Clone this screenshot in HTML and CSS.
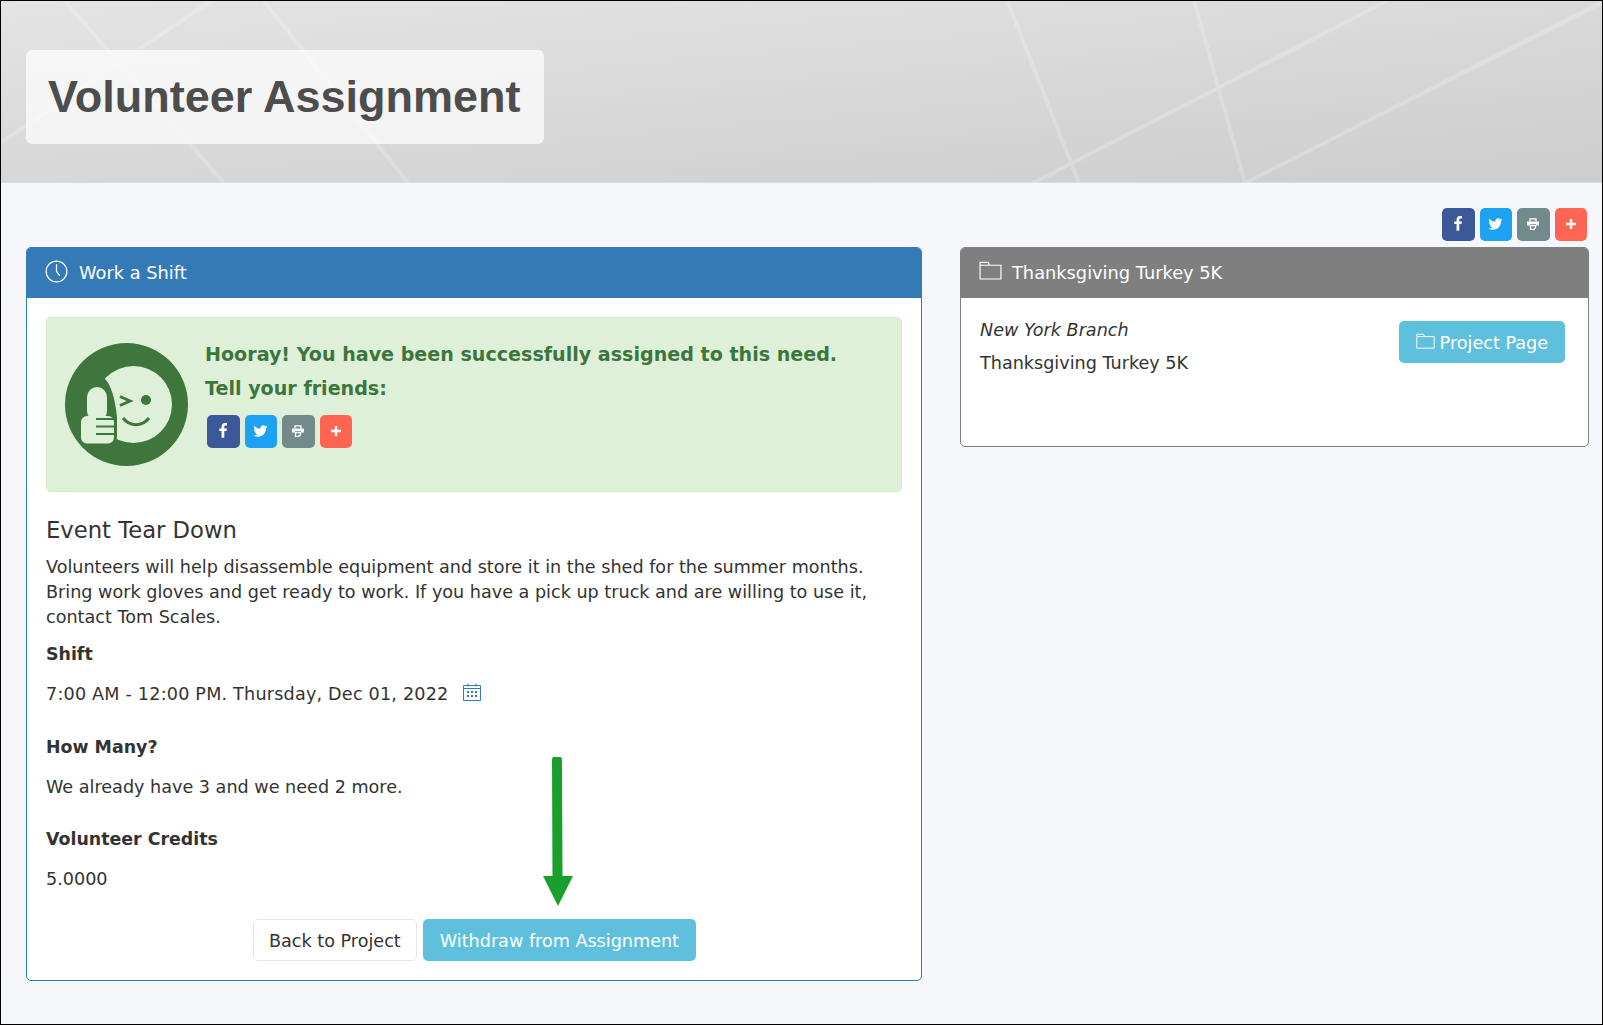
FILE: index.html
```html
<!DOCTYPE html>
<html lang="en">
<head>
<meta charset="utf-8">
<title>Volunteer Assignment</title>
<link rel="stylesheet" href="styles.css">
</head>
<body>
<svg class="sprites" width="0" height="0" aria-hidden="true">
  <symbol id="i-fb" viewBox="0 0 1792 1792"><path fill="#fff" d="M1343 12v264h-157q-86 0-116 36t-30 108v189h293l-39 296h-254v759h-306v-759h-255v-296h255v-218q0-186 104-288.5t277-102.5q147 0 228 12z"/></symbol>
  <symbol id="i-tw" viewBox="0 0 1792 1792"><path fill="#fff" d="M1620 408q-67 98-162 167 1 14 1 42 0 130-38 259.5t-115.5 248.5-184.5 210.5-258 146-323 54.5q-271 0-496-145 35 4 78 4 225 0 401-138-105-2-188-64.5t-114-159.5q33 5 61 5 43 0 85-11-112-23-185.5-111.5t-73.5-205.5v-4q68 38 146 41-66-44-105-115t-39-154q0-88 44-163 121 149 294.5 238.5t371.5 99.5q-8-38-8-74 0-134 94.5-228.5t228.5-94.5q140 0 236 102 109-21 205-78-37 115-142 178 93-10 186-50z"/></symbol>
  <symbol id="i-pr" viewBox="0 0 12 12"><path fill="none" stroke="#fff" stroke-width="1.300" d="M3 3.500V.8h6v2.700M3.500 7.500h5v2.200L7 11.300H3.500z"/><path fill="#fff" d="M0 3.500h12v4H9V6H3v1.500H0z"/></symbol>
  <symbol id="i-pl" viewBox="0 0 12 12"><path fill="#fff" d="M4.800 1h2.400v3.800H11v2.400H7.200V11H4.800V7.200H1V4.800h3.800z"/></symbol>
  <symbol id="i-folder" viewBox="0 0 24 20"><path fill="none" stroke="currentColor" stroke-width="1.200" d="M1 4V1.500h8.500L11 4.500h12v14.500H1V4.500h10"/></symbol>
</svg>

<div class="page">
  <header class="banner">
    <svg class="banner-lines" viewBox="0 0 1603 183" preserveAspectRatio="none" aria-hidden="true">
      <g stroke="#fff" stroke-opacity=".2" stroke-width="4" fill="none">
        <path d="M64 0 224 183M212 0 0 143M263 0 408 183"/>
        <path d="M1007 0 1079 183M1194 0 1245 183M1389 0 1033 183M1603 2 1245 183"/>
      </g>
    </svg>
    <h1 class="title">Volunteer Assignment</h1>
  </header>

  <main class="content">
    <div class="share share-top">
      <a class="sb sb-fb"><svg><use href="#i-fb"/></svg></a>
      <a class="sb sb-tw"><svg><use href="#i-tw"/></svg></a>
      <a class="sb sb-pr"><svg class="small"><use href="#i-pr"/></svg></a>
      <a class="sb sb-pl"><svg class="small"><use href="#i-pl"/></svg></a>
    </div>

    <div class="columns">
      <section class="panel panel-blue">
        <h2 class="panel-head">
          <svg class="head-icon" viewBox="0 0 24 24" aria-hidden="true"><circle cx="12" cy="12" r="10.800" fill="none" stroke="#fff" stroke-width="1.300"/><path d="M12 4.500V12l3.500 4.500" fill="none" stroke="#fff" stroke-width="1.300"/></svg>
          Work a Shift
        </h2>
        <div class="panel-body">
          <div class="alert">
            <svg class="thumb" viewBox="0 0 123 123" aria-hidden="true">
              <circle cx="61.500" cy="61.500" r="61.500" fill="#3f763d"/>
              <circle cx="68.500" cy="61.500" r="38.500" fill="#dff0d8"/>
              <path d="M30 30 40 36C46 42 50 55 52 74V94Q52 102 44 102H30z" fill="#3f763d"/>
              <rect x="22" y="44" width="20" height="34" rx="10" fill="#dff0d8"/>
              <rect x="16" y="73" width="33" height="27.500" rx="6" fill="#dff0d8"/>
              <path d="M31 76H49M31 83.500H49M31 91H49" stroke="#3f763d" stroke-width="1.800"/>
              <path d="M55 53.500 65 58 55 62.500" fill="none" stroke="#3f763d" stroke-width="3"/>
              <circle cx="81" cy="57" r="5" fill="#3f763d"/>
              <path d="M58 75C65 84 77 84 84 75" fill="none" stroke="#3f763d" stroke-width="3"/>
            </svg>
            <div class="alert-text">
              <p class="alert-line">Hooray! You have been successfully assigned to this need.</p>
              <p class="alert-line">Tell your friends:</p>
              <div class="share share-alert">
                <a class="sb sb-fb"><svg><use href="#i-fb"/></svg></a>
                <a class="sb sb-tw"><svg><use href="#i-tw"/></svg></a>
                <a class="sb sb-pr"><svg class="small"><use href="#i-pr"/></svg></a>
                <a class="sb sb-pl"><svg class="small"><use href="#i-pl"/></svg></a>
              </div>
            </div>
          </div>

          <h3 class="need-title">Event Tear Down</h3>
          <p class="need-desc">Volunteers will help disassemble equipment and store it in the shed for the summer months. Bring work gloves and get ready to work. If you have a pick up truck and are willing to use it, contact Tom Scales.</p>

          <h4 class="label label-shift">Shift</h4>
          <p class="value value-shift">7:00 AM - 12:00 PM. Thursday, Dec 01, 2022
            <svg class="cal" viewBox="0 0 18 18" aria-hidden="true">
              <path d="M.5 2.500h17v15H.5zM.5 5.500h17M5 .5v3M13 .5v3" fill="none" stroke="#337ab7"/>
              <path d="M4 8h2v2H4zM8 8h2v2H8zM12 8h2v2h-2zM4 12h2v2H4zM8 12h2v2H8zM12 12h2v2h-2z" fill="#337ab7"/>
            </svg>
          </p>

          <h4 class="label">How Many?</h4>
          <p class="value">We already have 3 and we need 2 more.</p>

          <h4 class="label">Volunteer Credits</h4>
          <p class="value">5.0000</p>

          <div class="actions">
            <a class="btn btn-default">Back to Project</a>
            <a class="btn btn-info">Withdraw from Assignment</a>
            <svg class="arrow" viewBox="0 0 32 150" aria-hidden="true">
              <path d="M15 3 15.500 122" stroke="#1a9e2c" stroke-width="10" stroke-linecap="round" fill="none"/>
              <path d="M1 119H31L16 149z" fill="#1a9e2c"/>
            </svg>
          </div>
        </div>
      </section>

      <section class="panel panel-grey">
        <h2 class="panel-head">
          <svg class="head-icon folder"><use href="#i-folder"/></svg>
          Thanksgiving Turkey 5K
        </h2>
        <div class="panel-body project-body">
          <div>
            <p class="branch">New York Branch</p>
            <p class="project-name">Thanksgiving Turkey 5K</p>
          </div>
          <a class="btn btn-info btn-project"><svg class="btn-folder"><use href="#i-folder"/></svg> Project Page</a>
        </div>
      </section>
    </div>
  </main>
</div>
</body>
</html>
```

FILE: styles.css
```css
* { box-sizing: border-box; }
html, body { margin: 0; padding: 0; }
body {
  font-family: "DejaVu Sans", Verdana, sans-serif;
  font-size: 17.6px;
  color: #333;
  background: #f5f7fb;
}
p, h1, h2, h3, h4 { margin: 0; }
.sprites { position: absolute; }

.page {
  height: 1025px;
  border: 1px solid #000;
  overflow: hidden;
  background: #f5f7fb;
}

/* banner */
.banner {
  position: relative;
  height: 182px;
  padding: 49px 25px 0;
  background: linear-gradient(175deg, #e4e4e4, #cdcdcd);
  border-bottom: 1px solid #d5dde5;
}
.banner-lines { position: absolute; left: -1px; top: -1px; width: 1603px; height: 183px; }
.title {
  position: relative;
  display: inline-block;
  height: 94px;
  width: 518px;
  padding: 0 22px;
  font: bold 45px/94px "Liberation Sans", Arial, sans-serif;
  color: #4d4d4d;
  background: rgba(255, 255, 255, .7);
  border-radius: 6px;
}

/* content */
.content { padding: 25px 13px 0 25px; }

.share { display: flex; }
.share-top { justify-content: flex-end; gap: 5px; padding-right: 2px; margin-bottom: 6.500px; }
.share-alert { gap: 5px; margin-left: 2px; margin-top: 9px; }
.sb {
  display: flex;
  align-items: center;
  justify-content: center;
  width: 32.500px;
  height: 32.500px;
  border-radius: 5px;
}
.sb svg { width: 16px; height: 16px; }
.sb svg.small { width: 12px; height: 12px; }
.sb-fb { background: #3b5998; }
.sb-tw { background: #1da1f2; }
.sb-pr { background: #738a8d; }
.sb-pl { background: #ff6550; }

.columns {
  display: grid;
  grid-template-columns: 896px 629px;
  gap: 38px;
  align-items: start;
}

.panel {
  background: #fff;
  border: 1px solid;
  border-radius: 5px;
  overflow: hidden;
}
.panel-blue { border-color: #337ab7; }
.panel-grey { border-color: #808080; }
.panel-head {
  display: flex;
  align-items: center;
  gap: 10px;
  height: 50px;
  padding: 0 18px 2px;
  font-size: 17.800px;
  font-weight: 400;
  color: #fff;
}
.panel-blue .panel-head { background: #337ab7; gap: 11px; }
.panel-grey .panel-head { background: #7f7f7f; }
.head-icon { width: 23px; height: 23px; color: #fff; margin-bottom: 1px; }
.head-icon.folder { height: 19px; margin-bottom: 3px; }

.panel-body { padding: 19px 19px 19px; }

/* alert */
.alert {
  display: flex;
  gap: 17px;
  height: 175px;
  padding: 25px 18px 0;
  background: #dff0d8;
  border: 1px solid #d6e9c6;
  border-radius: 5px;
}
.thumb { flex: none; width: 123px; height: 123px; }
.alert-text { margin-top: -5px; }
.alert-line {
  font-size: 19.100px;
  font-weight: 700;
  line-height: 34px;
  color: #3c763d;
}

/* need */
.need-title { margin-top: 23px; font-size: 22.700px; font-weight: 400; line-height: 30px; }
.need-desc { margin-top: 10px; line-height: 25px; }
.label { margin-top: 27.500px; font-size: 17.400px; font-weight: 700; line-height: 25px; }
.label-shift { margin-top: 12px; }
.value { margin-top: 15px; line-height: 25px; }
.value-shift { letter-spacing: .2px; }
.cal { width: 18px; height: 18px; margin-left: 9px; vertical-align: -1px; }

/* buttons */
.actions {
  position: relative;
  display: flex;
  justify-content: center;
  gap: 6px;
  margin-top: 27px;
}
.btn {
  display: inline-flex;
  align-items: center;
  height: 42px;
  padding: 1px 15.500px 0;
  border-radius: 5px;
  border: 1px solid transparent;
  font-size: 17.600px;
}
.btn-default { background: #fff; border-color: #e6e6e6; color: #333; }
.btn-info { background: #5fc0dd; color: #fff; }
.arrow { position: absolute; left: 496px; top: -162px; width: 32px; height: 150px; }

/* project panel */
.project-body {
  display: flex;
  justify-content: space-between;
  height: 148px;
  padding: 23px 23px 0 19px;
}
.branch { font-style: italic; line-height: 25px; margin-top: -3px; }
.project-name { margin-top: 8px; line-height: 25px; }
.btn-project { gap: 5px; padding-left: 16px; padding-right: 16px; }
.btn-folder { width: 19px; height: 16px; color: #fff; margin-bottom: 3px; }
```
